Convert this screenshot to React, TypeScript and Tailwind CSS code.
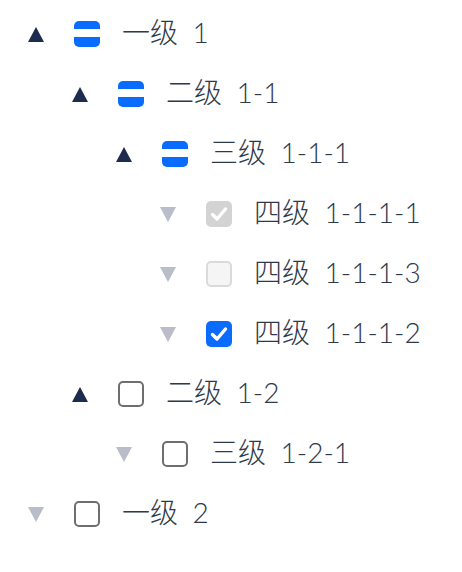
import React from "react";

type CheckState = "indeterminate" | "checked" | "unchecked" | "disabledChecked" | "disabledUnchecked";

interface TreeRow {
  label: string;
  level: number;
  expanded: boolean;
  state: CheckState;
}

const rows: TreeRow[] = [
  { label: "一级 1", level: 0, expanded: true, state: "indeterminate" },
  { label: "二级 1-1", level: 1, expanded: true, state: "indeterminate" },
  { label: "三级 1-1-1", level: 2, expanded: true, state: "indeterminate" },
  { label: "四级 1-1-1-1", level: 3, expanded: false, state: "disabledChecked" },
  { label: "四级 1-1-1-3", level: 3, expanded: false, state: "disabledUnchecked" },
  { label: "四级 1-1-1-2", level: 3, expanded: false, state: "checked" },
  { label: "二级 1-2", level: 1, expanded: true, state: "unchecked" },
  { label: "三级 1-2-1", level: 2, expanded: false, state: "unchecked" },
  { label: "一级 2", level: 0, expanded: false, state: "unchecked" },
];

const indents = ["pl-[28px]", "pl-[72px]", "pl-[116px]", "pl-[160px]"];

function Caret({ expanded }: { expanded: boolean }) {
  return (
    <svg width="16" height="15" viewBox="0 0 16 15" className="shrink-0">
      {expanded ? (
        <polygon points="8,0 16,15 0,15" fill="#1d2b4f" />
      ) : (
        <polygon points="0,0 16,0 8,15" fill="#b9bdca" />
      )}
    </svg>
  );
}

function CheckMark() {
  return (
    <svg width="26" height="26" viewBox="0 0 26 26">
      <path d="M6.5 13.5 L11 18 L19.5 8" fill="none" stroke="#fff" strokeWidth="3.4" strokeLinecap="round" strokeLinejoin="round" />
    </svg>
  );
}

function Checkbox({ state }: { state: CheckState }) {
  if (state === "indeterminate") {
    return (
      <div className="flex h-[26px] w-[26px] shrink-0 flex-col overflow-hidden rounded-[5px] bg-[#0a6cff]">
        <div className="mt-[8px] h-[8px] w-full bg-white" />
      </div>
    );
  }
  if (state === "checked") {
    return (
      <div className="h-[26px] w-[26px] shrink-0 rounded-[5px] bg-[#0a6cff]">
        <CheckMark />
      </div>
    );
  }
  if (state === "disabledChecked") {
    return (
      <div className="h-[26px] w-[26px] shrink-0 rounded-[5px] bg-[#d3d3d3]">
        <CheckMark />
      </div>
    );
  }
  if (state === "disabledUnchecked") {
    return <div className="h-[26px] w-[26px] shrink-0 rounded-[5px] border-2 border-[#dadada] bg-[#f5f5f5]" />;
  }
  return <div className="h-[26px] w-[26px] shrink-0 rounded-[5px] border-2 border-[#6e6e6e] bg-white" />;
}

export default function App() {
  return (
    <div
      className="min-h-[572px] w-[462px] bg-white pt-[4px]"
      style={{ fontFamily: '"Lato", "Noto Sans CJK SC", sans-serif' }}
    >
      {rows.map((row) => (
        <div key={row.label} className={`flex h-[60px] items-center ${indents[row.level]}`}>
          <Caret expanded={row.expanded} />
          <div className="ml-[30px]">
            <Checkbox state={row.state} />
          </div>
          <span className="ml-[22px] pb-[5px] text-[28px] font-light leading-none text-[#2e3a4c] [word-spacing:7px]">
            {row.label}
          </span>
        </div>
      ))}
    </div>
  );
}
